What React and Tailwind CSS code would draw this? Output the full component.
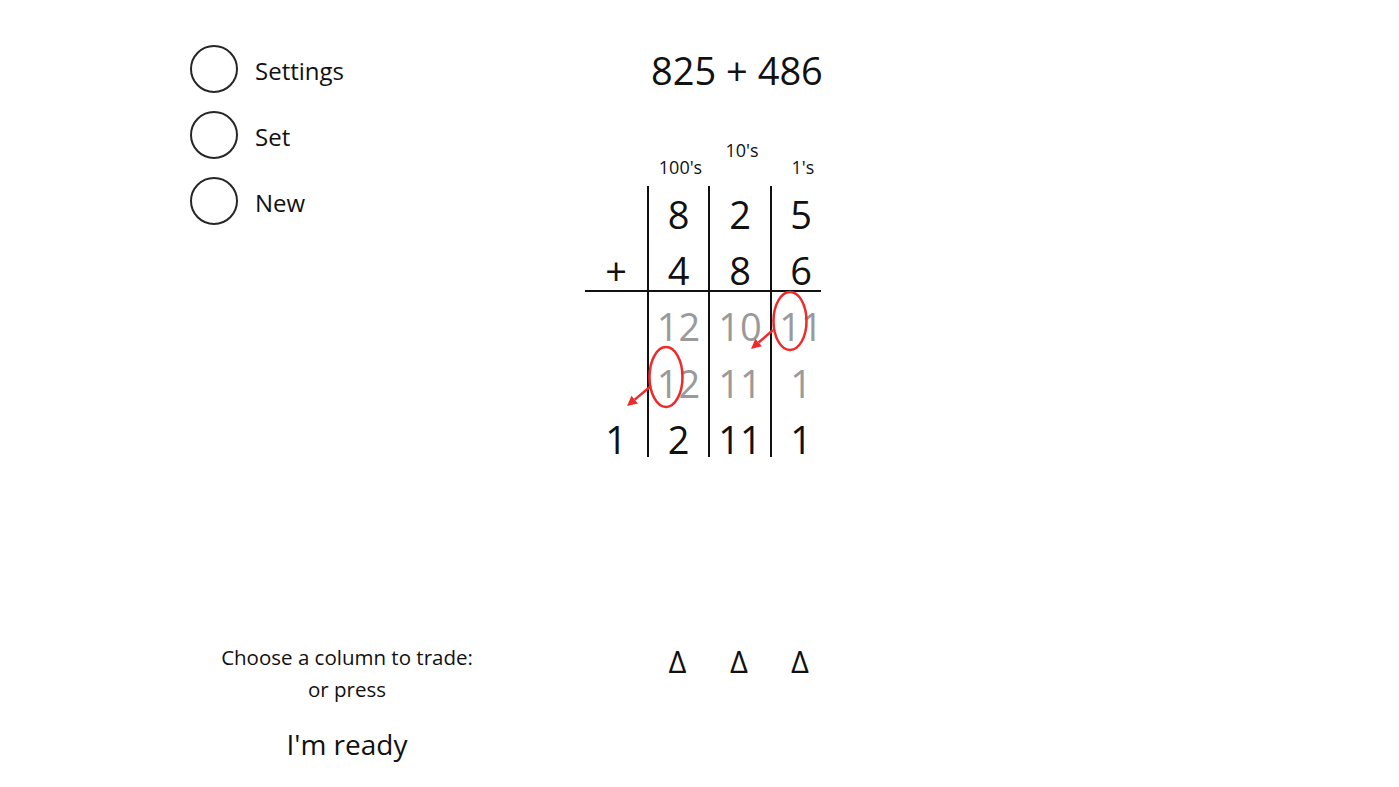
import React from "react";

const font = { fontFamily: '"Open Sans", "Noto Sans", sans-serif' };

const menu = ["Settings", "Set", "New"];

// each row: [left, 100's, 10's, 1's]
const topRows = [
  { cells: ["", "8", "2", "5"], cls: "h-[56px] pt-[10px]" },
  { cells: ["+", "4", "8", "6"], cls: "h-[48px] pt-[10px]" },
];

const bottomRows = [
  { cells: ["", "12", "10", "11"], cls: "h-[58px] pt-[16px]", gray: true },
  { cells: ["", "12", "11", "1"], cls: "h-[56px] pt-[15px]", gray: true },
  { cells: ["1", "2", "11", "1"], cls: "h-[51px] pt-[15px]", gray: false },
];

const cols = "grid grid-cols-[62px_61px_62px_60px]";

function Row({ row }) {
  return (
    <div className={cols}>
      {row.cells.map((c, i) => (
        <div
          key={i}
          className={`${row.cls} ${i > 0 ? "border-l-2 border-[#111]" : ""} text-center text-[38px] leading-[36px] ${
            row.gray ? "text-[#9a9a9a]" : "text-[#111]"
          }`}
        >
          {c}
        </div>
      ))}
    </div>
  );
}

export default function App() {
  return (
    <div className="flex h-[787px] w-[1399px] bg-white text-[#111]" style={font}>
      {/* left side */}
      <div className="flex w-[504px] flex-col pl-[190px]">
        <div className="flex flex-col gap-[18px] pt-[45px]">
          {menu.map((m) => (
            <div key={m} className="flex items-center gap-[17px]">
              <div className="h-[48px] w-[48px] rounded-full border-2 border-[#262626]" />
              <span className="mt-[4px] text-[24px] leading-[32px]">{m}</span>
            </div>
          ))}
        </div>
        <div className="mt-auto pb-[23px] text-center">
          <div className="text-[20.5px] leading-[32px]">Choose a column to trade:</div>
          <div className="text-[20.5px] leading-[32px]">or press</div>
          <div className="mt-[19px] text-[28px] leading-[40px]">I'm ready</div>
        </div>
      </div>

      {/* sum area */}
      <div className="ml-[81px] flex flex-col">
        <div className="pl-[66px] pt-[44px] text-[38px] leading-[52px]">825 + 486</div>

        <div className={`${cols} mt-[39px] h-[51px] text-[18px] leading-[24px]`}>
          <div />
          <div className="mt-[20px] pl-[6px] text-center">100's</div>
          <div className="mt-[3px] pl-[6px] text-center">10's</div>
          <div className="mt-[20px] pl-[6px] text-center">1's</div>
        </div>

        <div className="relative">
          {topRows.map((r, i) => (
            <Row key={i} row={r} />
          ))}
          <div className="h-[2px] w-[236px] bg-[#111]" />
          {bottomRows.map((r, i) => (
            <Row key={i} row={r} />
          ))}

          <svg
            className="pointer-events-none absolute left-0 top-0 overflow-visible"
            width="245"
            height="271"
            viewBox="0 0 245 271"
          >
            <ellipse cx="205" cy="135" rx="16.5" ry="29" fill="none" stroke="#ee2b2b" strokeWidth="2.5" />
            <line x1="188" y1="144" x2="173.6" y2="156.5" stroke="#ee2b2b" strokeWidth="2.5" />
            <polygon points="166,163 176.9,160.3 170.3,152.7" fill="#ee2b2b" />
            <ellipse cx="81" cy="191" rx="16.5" ry="30" fill="none" stroke="#ee2b2b" strokeWidth="2.5" />
            <line x1="66" y1="200" x2="49.7" y2="213.6" stroke="#ee2b2b" strokeWidth="2.5" />
            <polygon points="42,220 52.9,217.4 46.5,209.8" fill="#ee2b2b" />
          </svg>
        </div>

        <div className={`${cols} mt-[184px] text-[31px] font-medium leading-[40px]`}>
          <div />
          <div className="text-center">Δ</div>
          <div className="text-center">Δ</div>
          <div className="text-center">Δ</div>
        </div>
      </div>
    </div>
  );
}
